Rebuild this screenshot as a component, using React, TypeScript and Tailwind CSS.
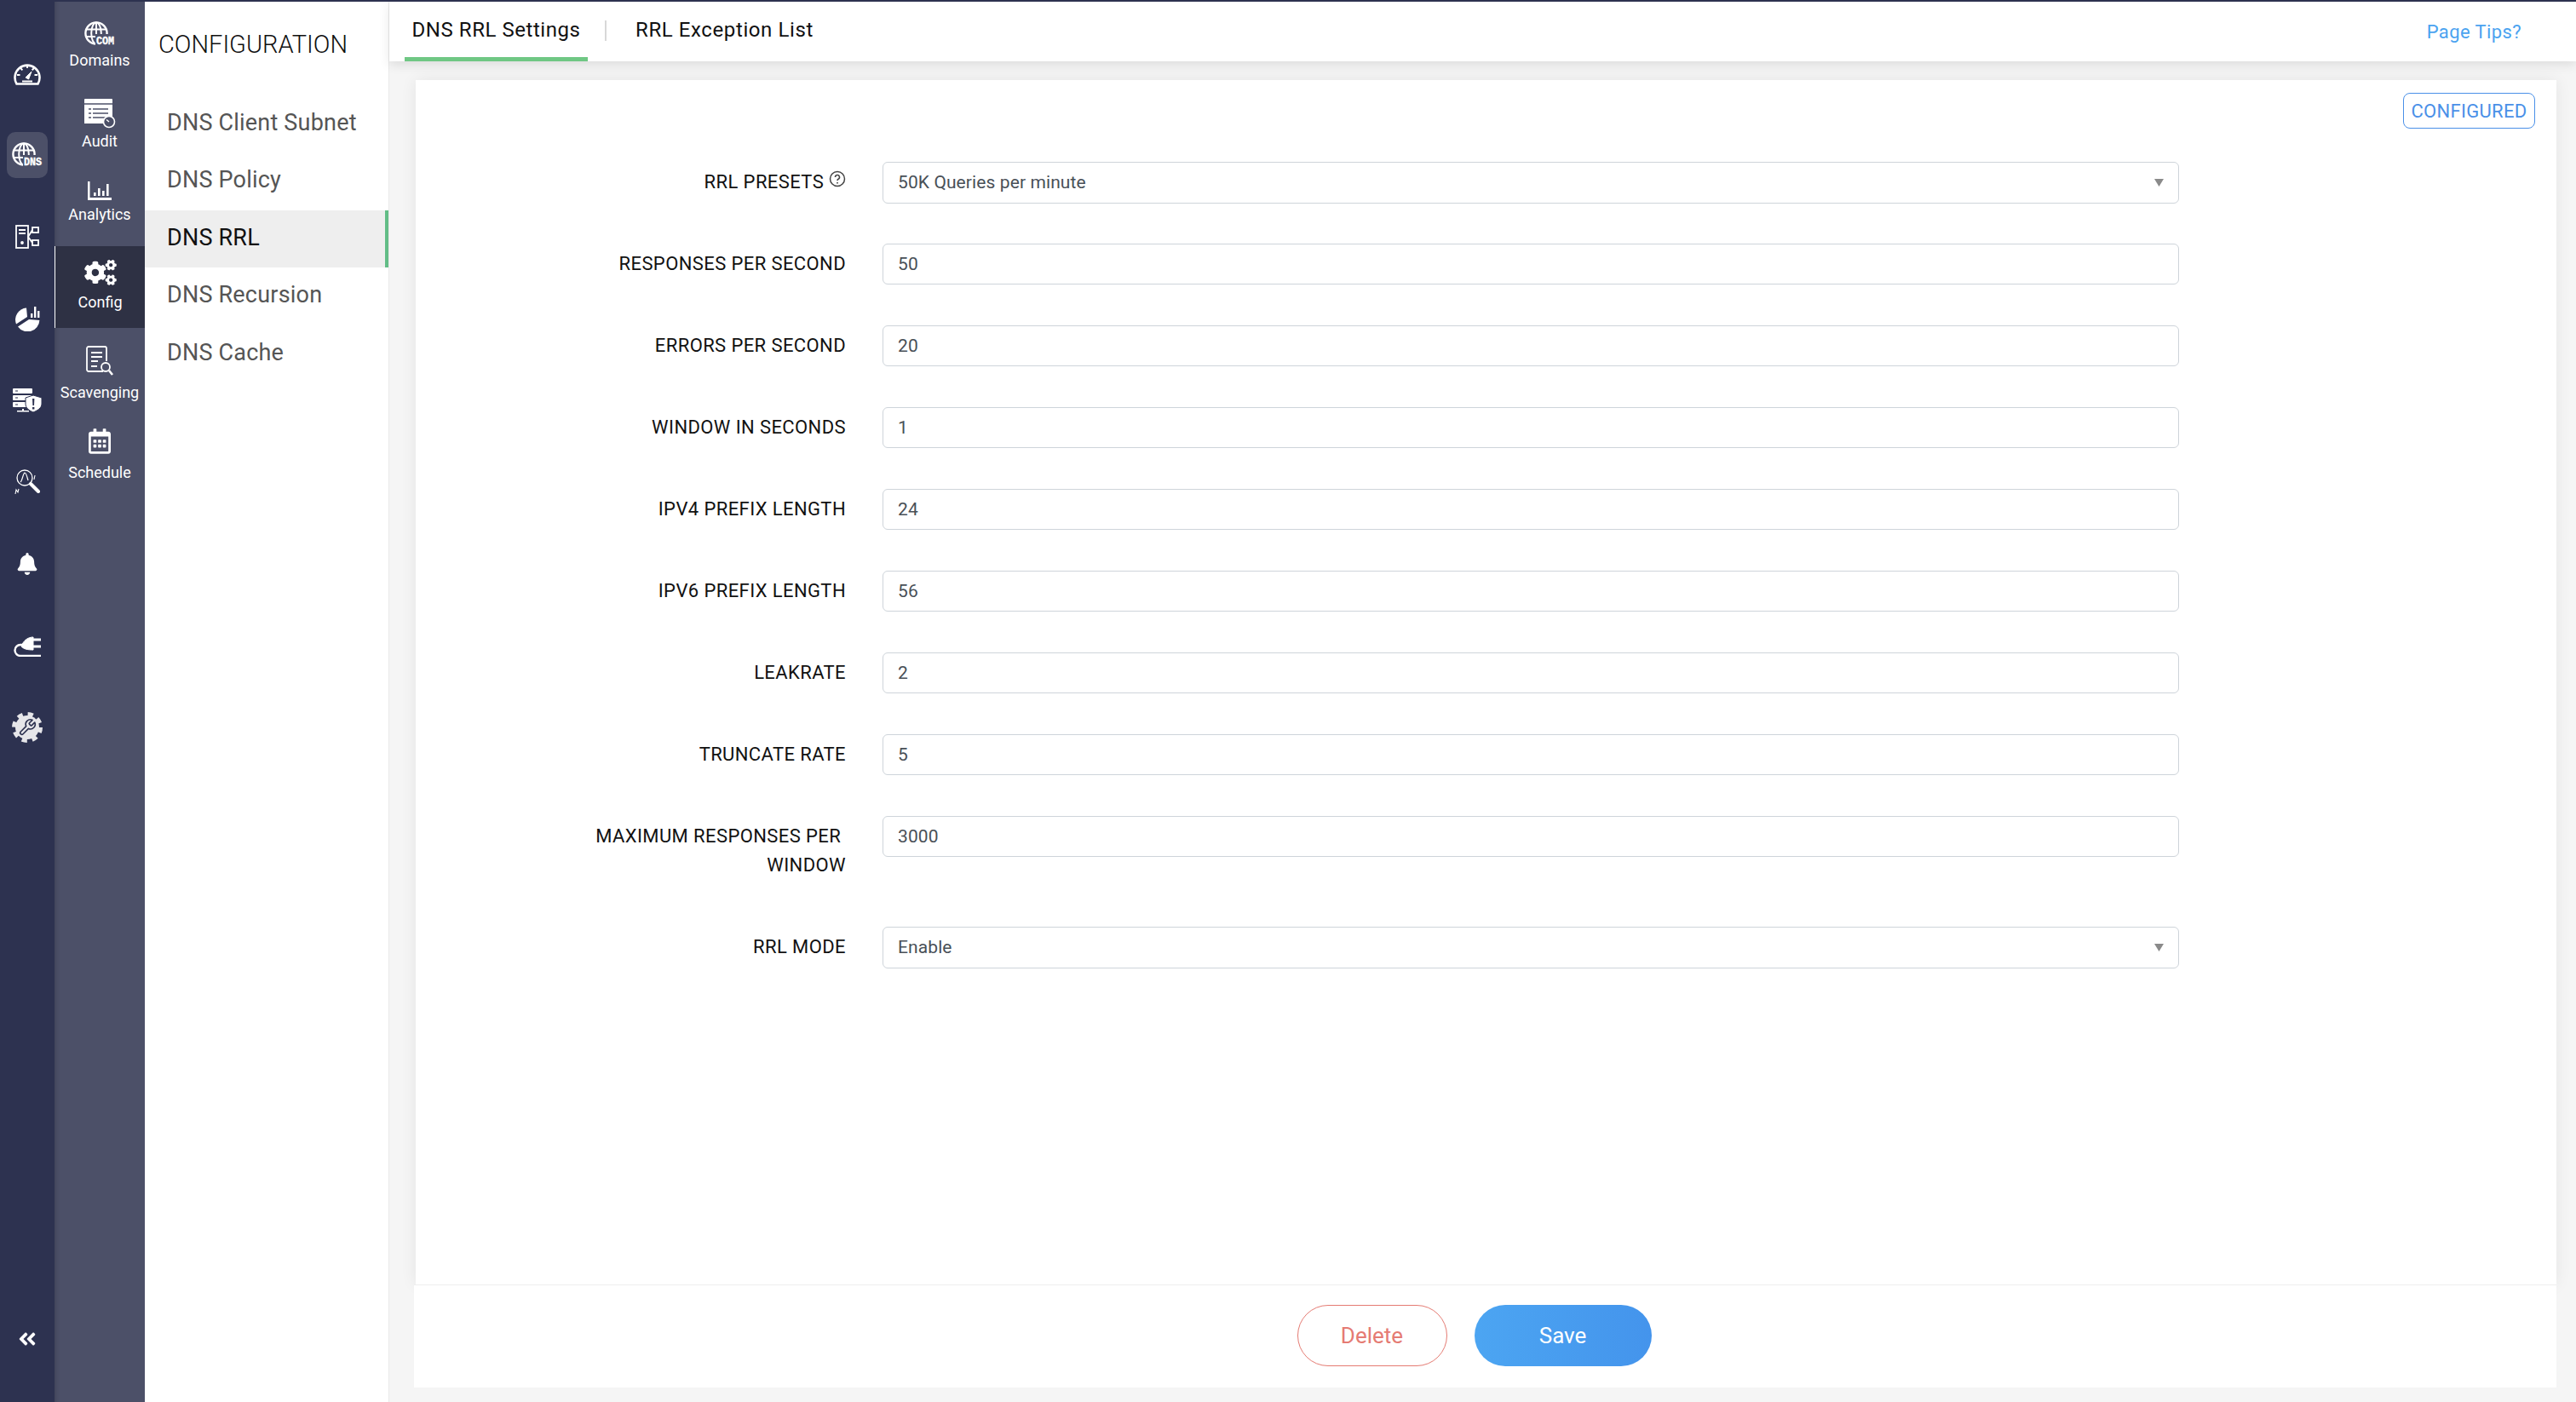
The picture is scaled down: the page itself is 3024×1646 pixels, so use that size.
import React from 'react';
import { FaAngleDoubleLeft, FaBell, FaCogs, FaRegCalendarAlt } from 'react-icons/fa';

const Globe: React.FC<{ tag: string; className?: string }> = ({ tag, className }) => (
    <svg viewBox="0 0 36 30" className={className} fill="none" stroke="white">
        <circle cx="14" cy="14" r="12.6" strokeWidth="2.4" />
        <ellipse cx="14" cy="14" rx="5.8" ry="12.6" strokeWidth="2" />
        <path d="M2 9.5h24M2 18h24M14 1v26" strokeWidth="2" />
        <rect x="13" y="15" width="23" height="15" fill="var(--icon-bg)" stroke="none" />
        <text x="24.5" y="27" textAnchor="middle" fontSize="12" fontWeight="900" fill="white" stroke="white" strokeWidth="0.4" fontFamily="'Liberation Mono', monospace" textLength="21" lengthAdjust="spacingAndGlyphs">{tag}</text>
    </svg>
);

const GaugeIcon = () => (
    <svg viewBox="0 0 32 28" className="w-8 h-7" fill="none" stroke="white">
        <path d="M3.5 26.5a14.5 14.5 0 1 1 25 0z" strokeWidth="2.6" strokeLinejoin="round" />
        <path d="M16 4.5v3.5M8 8l2.4 2.4M24 8l-2.4 2.4M4 16h3.5M28 16h-3.5" strokeWidth="2" />
        <path d="M14 19l7-7-3.4 9z" fill="white" strokeWidth="1" />
        <path d="M10 23.5h12" strokeWidth="2" />
    </svg>
);

const ServerTreeIcon = () => (
    <svg viewBox="0 0 28 28" className="w-7 h-7" fill="none" stroke="white" strokeWidth="1.8">
        <rect x="1" y="1" width="14" height="26" />
        <path d="M4 6h8M4 10h8" />
        <circle cx="8" cy="21" r="1" fill="white" />
        <rect x="20" y="3" width="7" height="6" />
        <rect x="20" y="18" width="7" height="6" />
        <path d="M15 14l5-8M15 14l5 7" />
    </svg>
);

const PieIcon = () => (
    <svg viewBox="0 0 30 30" className="w-[30px] h-[30px]" fill="white">
        <path d="M14 2.5A14 14 0 0 0 2 21.5L15 13z" />
        <path d="M4 24.5L17 16l12.4 1A14 14 0 0 1 4 24.5z" />
        <path d="M19 9h2.4v5H19zM23 1h2.4v13H23zM27 6h2.4v8H27z" />
    </svg>
);

const ServerShieldIcon = () => (
    <svg viewBox="0 0 34 28" className="w-[34px] h-7">
        <rect x="0" y="0" width="23" height="6" rx="1" fill="white" />
        <rect x="0" y="8" width="23" height="6" rx="1" fill="white" />
        <rect x="0" y="16" width="23" height="6" rx="1" fill="white" />
        <path d="M3 3h3M3 11h3M3 19h3" stroke="#2d3250" strokeWidth="1.2" />
        <path d="M11 24h2v2h6v1.4H5V26h6z" fill="white" />
        <path d="M24 8l10 3v7c0 5-5 8-10 10-5-2-9-5-9-10v-7z" fill="white" stroke="#2d3250" strokeWidth="1" />
        <path d="M23 12h2.4l-.4 8h-1.6zM23 22h2.4v2.4H23z" fill="#2d3250" />
    </svg>
);

const SearchWaveIcon = () => (
    <svg viewBox="0 0 30 30" className="w-[30px] h-[30px]" fill="none" stroke="white">
        <circle cx="12" cy="10" r="9" strokeWidth="1.3" />
        <path d="M7 15c2-1 3-10 5-11 2 0 3 6 4 9" strokeWidth="1.2" />
        <path d="M19 17l9 9" strokeWidth="4" strokeLinecap="round" />
        <path d="M1 29l1-5 2 3 1-4M23 12l1-5" strokeWidth="1.1" />
    </svg>
);

const PlugIcon = () => (
    <svg viewBox="0 0 34 26" className="w-[34px] h-[26px]" fill="none" stroke="white">
        <path d="M10 14c2-6 7-11 14-11v15c-7 0-11-1-14-4z" fill="white" strokeWidth="1" />
        <path d="M24 6h9M24 14h9" strokeWidth="3" />
        <path d="M12 12H9a6.5 6.5 0 0 0 0 13h24" strokeWidth="2.4" />
    </svg>
);

const GearWrenchIcon = () => (
    <svg viewBox="0 0 36 36" className="w-9 h-9">
        <circle cx="18" cy="18" r="14" fill="#e6e6e9" />
        <circle cx="18" cy="18" r="15.5" fill="none" stroke="#e6e6e9" strokeWidth="5" strokeDasharray="6.2 6" />
        <g transform="translate(7 7) scale(0.92)" fill="none" stroke="#2d3250" strokeWidth="1.8" strokeLinejoin="round">
            <path d="M14.7 6.3a1 1 0 0 0 0 1.4l1.6 1.6a1 1 0 0 0 1.4 0l3.77-3.77a6 6 0 0 1-7.94 7.94l-6.91 6.91a2.12 2.12 0 0 1-3-3l6.91-6.91a6 6 0 0 1 7.94-7.94l-3.76 3.76z" />
        </g>
    </svg>
);

const AuditIcon = () => (
    <svg viewBox="0 0 38 36" className="w-[38px] h-9">
        <path d="M1 2a1 1 0 0 1 1-1h31a1 1 0 0 1 1 1v28H1z" fill="white" />
        <path d="M1 7h33" stroke="#4c5068" strokeWidth="1.5" />
        <path d="M6 13h3M11 13h18M6 18h3M11 18h18M6 23h3M11 23h18" stroke="#4c5068" strokeWidth="1.6" />
        <circle cx="30" cy="28" r="6.5" fill="#4c5068" stroke="white" strokeWidth="1.6" />
        <path d="M30 28l-3-2.5" stroke="white" strokeWidth="1.4" />
    </svg>
);

const AnalyticsIcon = () => (
    <svg viewBox="0 0 28 22" className="w-7 h-[22px]" fill="white">
        <path d="M0 0h2.5v19H28v3H0z" />
        <path d="M7 13h2.6v4H7zM12 8h2.6v9H12zM17 11h2.6v6H17zM22 3h2.6v14H22z" />
    </svg>
);

const ScavengingIcon = () => (
    <svg viewBox="0 0 32 36" className="w-8 h-9" fill="none" stroke="white" strokeWidth="1.8">
        <path d="M20 30H3a2 2 0 0 1-2-2V3a2 2 0 0 1 2-2h19a2 2 0 0 1 2 2v15" />
        <path d="M6 8h13M6 13h13M6 18h8M6 24h7" />
        <circle cx="23" cy="25" r="5" />
        <path d="M27 29l4 5" strokeWidth="2.6" />
    </svg>
);

const railIcons = [
    { icon: <GaugeIcon /> },
    { icon: <Globe tag="DNS" className="w-[36px] h-[30px] [--icon-bg:#4c5068]" />, active: true },
    { icon: <ServerTreeIcon /> },
    { icon: <PieIcon /> },
    { icon: <ServerShieldIcon /> },
    { icon: <SearchWaveIcon /> },
    { icon: <FaBell className="w-[24px] h-[26px] text-white" /> },
    { icon: <PlugIcon /> },
    { icon: <GearWrenchIcon /> },
];

const subNav = [
    { label: 'Domains', h: 'h-[97px] pt-[19px]', gap: 'mt-0', icon: <Globe tag="COM" className="w-[36px] h-[30px] [--icon-bg:#4c5068]" /> },
    { label: 'Audit', h: 'h-[96px] pt-[15px]', gap: 'mt-[2px]', icon: <AuditIcon /> },
    { label: 'Analytics', h: 'h-[94px] pt-[10px]', gap: '-mt-[3px]', icon: <AnalyticsIcon /> },
    { label: 'Config', h: 'h-[96px] pt-[12px]', gap: 'mt-1', active: true, icon: <FaCogs className="w-[38px] h-[30px] text-white" /> },
    { label: 'Scavenging', h: 'h-[107px] pt-[20px]', gap: 'mt-[6px]', icon: <ScavengingIcon /> },
    { label: 'Schedule', h: 'h-[90px] pt-[7px]', gap: 'mt-[6px]', icon: <FaRegCalendarAlt className="w-[26px] h-[30px] text-white" /> },
];

const menu = ['DNS Client Subnet', 'DNS Policy', 'DNS RRL', 'DNS Recursion', 'DNS Cache'];

const Caret = () => (
    <svg viewBox="0 0 10 8" className="w-[11px] h-[9px] fill-[#8a8a8a]">
        <path d="M0 0h10L5 8z" />
    </svg>
);

interface RowProps {
    label: React.ReactNode;
    value: string;
    select?: boolean;
    tall?: boolean;
}

const Row: React.FC<RowProps> = ({ label, value, select, tall }) => (
    <div className={`flex items-start ${tall ? 'h-[130px]' : 'h-[96px]'}`}>
        <div className="w-[315px] ml-[190px] pt-[7px] text-right text-[22px] leading-[34px] tracking-[0.4px] text-[#111]">{label}</div>
        {select ? (
            <div className="ml-[43px] w-[1522px] h-[49px] flex items-center justify-between pl-[17px] pr-[17px] bg-white border border-[#ced4da] rounded-md text-[21px] tracking-[0.1px] text-[#495057]">
                <span>{value}</span>
                <Caret />
            </div>
        ) : (
            <input
                readOnly
                value={value}
                className="ml-[43px] w-[1522px] h-[48px] pl-[17px] bg-white border border-[#ced4da] rounded-md text-[21px] tracking-[0.1px] text-[#495057] outline-none"
            />
        )}
    </div>
);

export default function App() {
    return (
        <div className="flex h-[1646px] border-t-2 border-[#2d3250] bg-[#f5f5f5] overflow-hidden font-['Roboto',sans-serif]">
            {/* far left rail */}
            <div className="w-16 shrink-0 bg-[#2d3250] flex flex-col items-center pt-[36px]">
                {railIcons.map((item, i) => (
                    <div key={i} className="w-12 h-[96px] shrink-0 flex items-center justify-center">
                        <div className={`flex items-center justify-center w-12 h-[54px] rounded-[10px] ${item.active ? 'bg-[#4c5068]' : ''}`}>
                            {item.icon}
                        </div>
                    </div>
                ))}
                <div className="mt-auto mb-[62px] text-white">
                    <FaAngleDoubleLeft className="w-6 h-6" />
                </div>
            </div>

            {/* sub rail */}
            <div className="w-[106px] shrink-0 bg-[#4c5068] shadow-[inset_6px_0_6px_-6px_rgba(0,0,0,0.25)]">
                {subNav.map(item => (
                    <div
                        key={item.label}
                        className={`${item.h} flex flex-col items-center text-white text-[18px] leading-[24px] ${item.active ? 'bg-[#2e3144] border-l border-white' : ''}`}
                    >
                        <div className="h-[38px] flex items-center justify-center">{item.icon}</div>
                        <span className={item.gap}>{item.label}</span>
                    </div>
                ))}
            </div>

            {/* config menu */}
            <div className="w-[287px] shrink-0 bg-white border-r border-[#e9e9e9]">
                <h1 className="pl-4 pt-[30px] h-[110px] text-[29px] leading-[40px] font-light text-[#111]">CONFIGURATION</h1>
                {menu.map(item => (
                    <div
                        key={item}
                        className={`h-[67.4px] flex items-center pl-[26px] pb-[3px] text-[27px] tracking-[0.2px] ${item === 'DNS RRL' ? 'bg-[#eeeeee] text-[#111] border-r-4 border-[#62bd86]' : 'text-[#555]'}`}
                    >
                        {item}
                    </div>
                ))}
            </div>

            {/* main */}
            <div className="flex-1 flex flex-col min-w-0">
                <div className="relative z-10 h-[70px] shrink-0 bg-white flex items-start pl-[18px] pr-[64px] shadow-[0_4px_12px_rgba(0,0,0,0.1)]">
                    <div className="h-[70px] w-[215px] border-b-[5px] border-[#6fc784] text-[24px] leading-[66px] tracking-[0.55px] text-[#111] text-center">DNS RRL Settings</div>
                    <div className="w-[2px] h-6 mt-[22px] ml-5 bg-[#d8d8d8]" />
                    <div className="ml-[34px] text-[24px] leading-[66px] tracking-[0.6px] text-[#111]">RRL Exception List</div>
                    <a className="ml-auto text-[22px] leading-[72px] tracking-[0.4px] text-[#4aa3f0]">Page Tips?</a>
                </div>

                <div className="flex-1 min-h-0 flex flex-col pt-[22px] pl-[29px] pr-[23px] pb-[17px]">
                    <div className="relative flex-1 ml-[2px] bg-white pt-[96px] shadow-[0_0_18px_rgba(0,0,0,0.07)]">
                        <div className="absolute top-[15px] right-[25px] w-[155px] h-[42px] flex items-center justify-center border border-[#4a90e8] rounded-lg text-[22px] tracking-[0.3px] text-[#4a90e8]">
                            CONFIGURED
                        </div>
                        <Row label={<>RRL PRESETS <svg viewBox="0 0 20 20" className="inline w-5 h-5 align-[1px] fill-none stroke-[#444]"><circle cx="10" cy="10" r="8.5" strokeWidth="1.5" /><path d="M7.5 8a2.5 2.5 0 1 1 3.6 2.2c-.8.4-1.1.9-1.1 1.8" strokeWidth="1.6" /><path d="M10 14v1.6" strokeWidth="1.7" /></svg></>} value="50K Queries per minute" select />
                        <Row label="RESPONSES PER SECOND" value="50" />
                        <Row label="ERRORS PER SECOND" value="20" />
                        <Row label="WINDOW IN SECONDS" value="1" />
                        <Row label="IPV4 PREFIX LENGTH" value="24" />
                        <Row label="IPV6 PREFIX LENGTH" value="56" />
                        <Row label="LEAKRATE" value="2" />
                        <Row label="TRUNCATE RATE" value="5" />
                        <Row label={'MAXIMUM RESPONSES PER\u00a0 WINDOW'} value="3000" tall />
                        <Row label="RRL MODE" value="Enable" select />
                    </div>
                    <div className="relative h-[121px] shrink-0 bg-white border-t border-[#eeeeee] flex items-center justify-center gap-8 pr-[26px] pb-[2px]">
                        <button className="w-[176px] h-[72px] rounded-full border border-[#e57b73] bg-white text-[26px] text-[#e57b73]">Delete</button>
                        <button className="w-[208px] h-[72px] rounded-full bg-gradient-to-r from-[#4ca5f2] to-[#4494ec] text-[26px] text-white">Save</button>
                    </div>
                </div>
            </div>
        </div>
    );
}
